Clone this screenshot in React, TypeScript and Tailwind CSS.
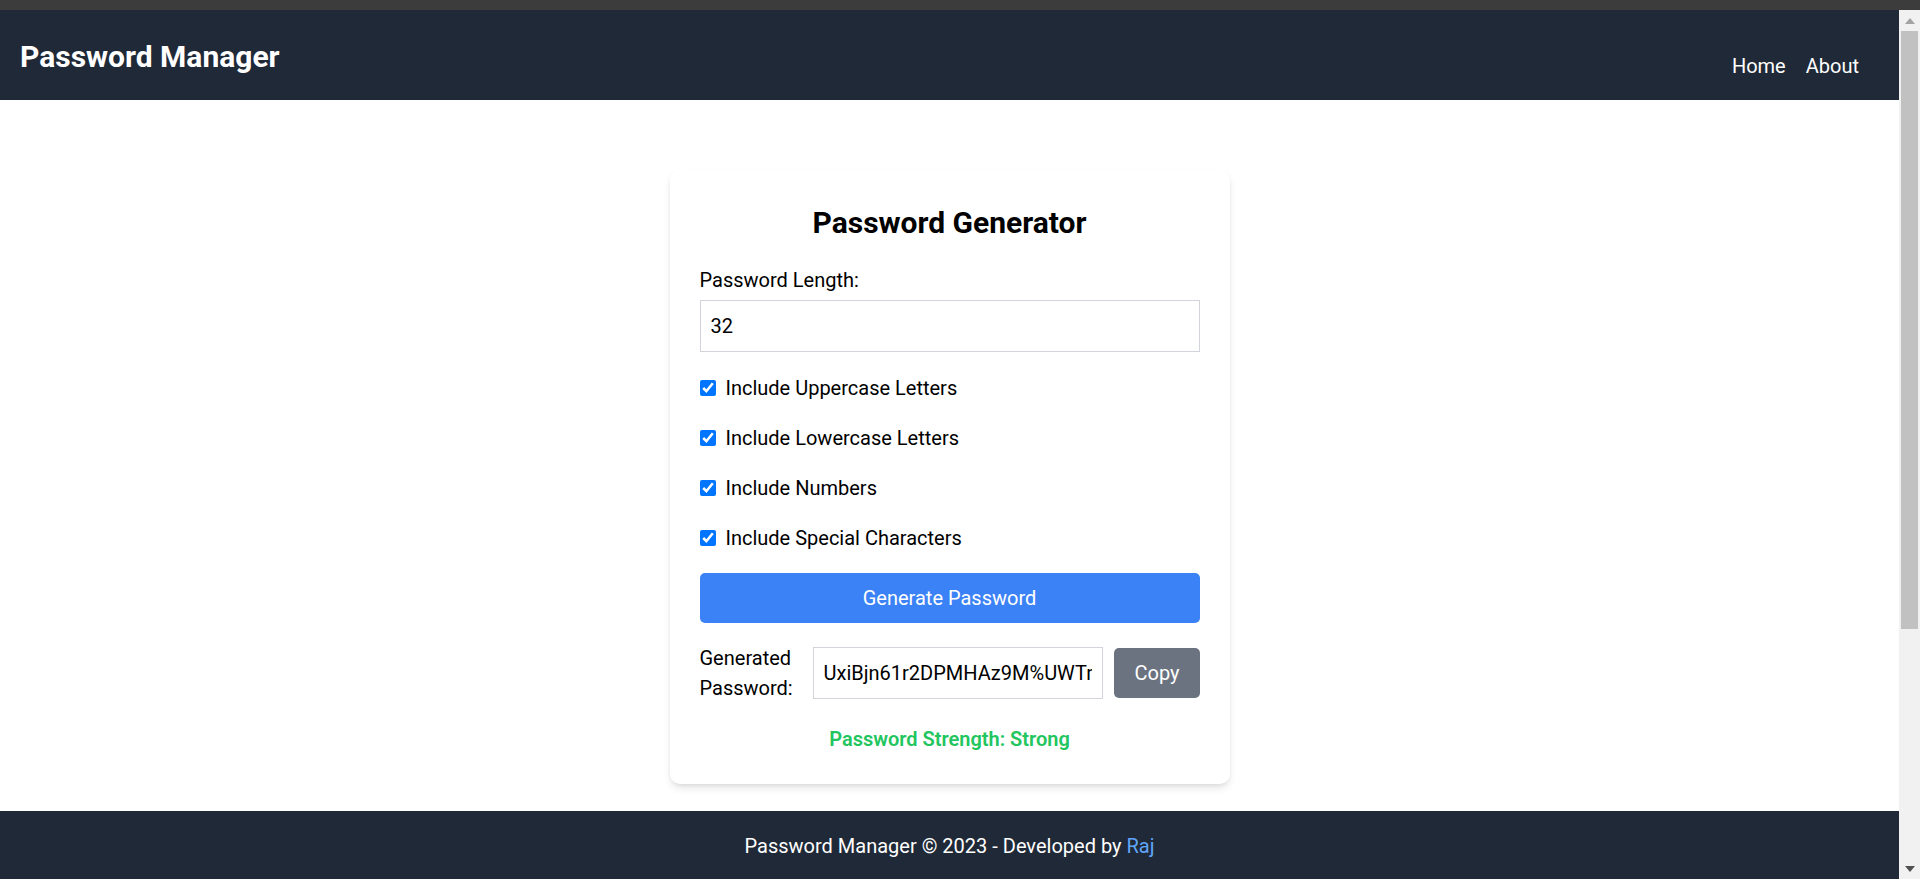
import React from "react";

const font = { fontFamily: "Roboto, 'Noto Sans', sans-serif" };

function Scrollbar() {
  return (
    <div className="w-[21px] shrink-0 bg-[#f1f1f1] flex flex-col items-center">
      <div className="h-[21px] w-full flex items-center justify-center">
        <svg width="10" height="6" viewBox="0 0 10 6">
          <polygon points="0,6 10,6 5,0" fill="#a3a3a3" />
        </svg>
      </div>
      <div className="w-[17px] h-[598px] bg-[#c1c1c1]" />
      <div className="flex-1" />
      <div className="h-[21px] w-full flex items-center justify-center">
        <svg width="10" height="6" viewBox="0 0 10 6">
          <polygon points="0,0 10,0 5,6" fill="#505050" />
        </svg>
      </div>
    </div>
  );
}

function Check({ label }: { label: string }) {
  return (
    <div className="mb-[20px]">
      <label className="flex items-center leading-[30px] text-[20px]">
        <input type="checkbox" defaultChecked className="w-[16px] h-[16px] mr-[10px]" />
        {label}
      </label>
    </div>
  );
}

export default function App() {
  return (
    <div className="h-[879px] flex flex-col overflow-hidden bg-white text-black" style={font}>
      <div className="h-[10px] shrink-0 bg-[#3c3c3c]" />
      <div className="flex flex-1 min-h-0">
        <div className="flex-1 flex flex-col overflow-hidden">
          <header className="h-[90px] shrink-0 bg-[#1f2937] text-white flex justify-between pl-[20px] pr-[40px]">
            <h1 className="pt-[24px] text-[30px] leading-[45px] font-bold">Password Manager</h1>
            <nav className="pt-[41px] flex gap-[20px] text-[20px] leading-[30px]">
              <a>Home</a>
              <a>About</a>
            </nav>
          </header>
          <main className="shrink-0 pt-[70px] pb-[27px]">
            <div className="w-[560px] mx-auto bg-white rounded-[10px] p-[30px] shadow-[0_5px_8px_-1px_rgba(0,0,0,0.1),0_2px_5px_-2px_rgba(0,0,0,0.1)]">
              <h2 className="text-[30px] leading-[45px] font-bold text-center mb-[20px]">Password Generator</h2>
              <div className="mb-[21px]">
                <label className="block text-[20px] leading-[30px] mb-[5px]">Password Length:</label>
                <input
                  type="number"
                  defaultValue={32}
                  className="w-full border border-[#d1d5db] px-[10px] py-[10px] text-[20px] leading-[30px] outline-none"
                />
              </div>
              <Check label="Include Uppercase Letters" />
              <Check label="Include Lowercase Letters" />
              <Check label="Include Numbers" />
              <Check label="Include Special Characters" />
              <button className="w-full bg-[#3b82f6] text-white rounded-[5px] py-[10px] text-[20px] leading-[30px]">
                Generate Password
              </button>
              <div className="mt-[20px] flex items-center">
                <label className="w-[103px] shrink-0 mr-[10px] text-[20px] leading-[30px]">Generated Password:</label>
                <input
                  readOnly
                  value="UxiBjn61r2DPMHAz9M%UWTrq8eK!s#Lp4"
                  className="flex-1 min-w-0 border border-[#d1d5db] px-[10px] py-[10px] text-[20px] leading-[30px] outline-none"
                />
                <button className="ml-[11px] shrink-0 bg-[#6b7280] text-white rounded-[5px] px-[20px] py-[10px] text-[20px] leading-[30px]">
                  Copy
                </button>
              </div>
              <p className="mt-[21px] text-center text-[20px] leading-[30px] font-semibold text-[#22c55e]">
                Password Strength: Strong
              </p>
            </div>
          </main>
          <footer className="shrink-0 bg-[#1f2937] text-white text-center pt-[20px] pb-[20px] text-[20px] leading-[30px]">
            Password Manager © 2023 - Developed by <a className="text-[#60a5fa]">Raj</a>
          </footer>
        </div>
        <Scrollbar />
      </div>
    </div>
  );
}
